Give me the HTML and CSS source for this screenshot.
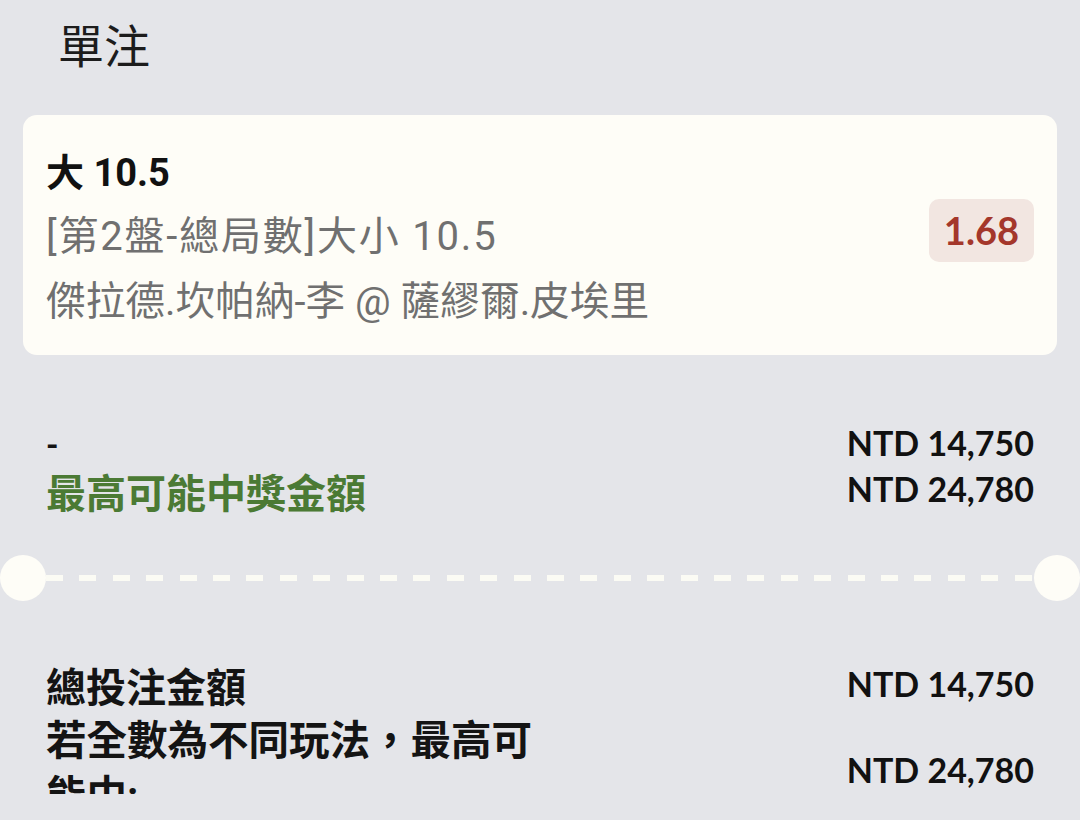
FILE: index.html
```html
<!DOCTYPE html>
<html lang="zh-Hant">
<head>
    <meta charset="UTF-8">
    <meta name="viewport" content="width=device-width, initial-scale=1.0">
    <title>單注</title>
    <link rel="stylesheet" href="styles.css">
</head>
<body>
    <div class="screen">
        <h2 class="title">單注</h2>

        <div class="bet-card">
            <div class="bet-info">
                <div class="bet-pick">大 10.5</div>
                <div class="bet-line market">[第2盤-總局數]大小 10.5</div>
                <div class="bet-line last">傑拉德.坎帕納-李 @ 薩繆爾.皮埃里</div>
            </div>
            <div class="odds">1.68</div>
        </div>

        <div class="summary">
            <div class="row">
                <span class="label dash">-</span>
                <span class="amount">NTD 14,750</span>
            </div>
            <div class="row">
                <span class="label win">最高可能中獎金額</span>
                <span class="amount">NTD 24,780</span>
            </div>
        </div>

        <div class="ticket-cut">
            <span class="notch"></span>
            <span class="cut-line"></span>
            <span class="notch"></span>
        </div>

        <div class="totals">
            <div class="row total-row">
                <span class="label">總投注金額</span>
                <span class="amount">NTD 14,750</span>
            </div>
            <div class="row multi-row">
                <span class="label wrap">若全數為不同玩法，最高可能中:</span>
                <span class="amount">NTD 24,780</span>
            </div>
        </div>
    </div>
</body>
</html>
```

FILE: styles.css
```css
body { margin: 0; background: #e4e5e9; font-family: Roboto, "Noto Sans CJK TC", sans-serif; color: #141414; }
.screen { height: 794px; overflow: hidden; }

.title { margin: 0; padding-left: 58px; height: 94px; line-height: 94px; font-size: 46px; font-weight: 400; color: #1c1c1c; }

.bet-card { display: flex; align-items: center; margin: 21px 23px 0; padding: 26px 23px 21px; background: #fefdf7; border-radius: 14px; }
.bet-info { flex: 1; }
.bet-pick { height: 64px; line-height: 64px; font-size: 38px; font-weight: 700; color: #111; }
.bet-line { height: 64px; line-height: 64px; font-size: 40px; color: #707070; }
.bet-line.market { letter-spacing: 1.8px; }
.bet-line.last { height: 65px; line-height: 65px; font-size: 39.7px; }
.odds { margin-bottom: 14px; padding: 0 15px; height: 63px; line-height: 63px; background: #f2e6e1; border-radius: 10px; font-family: Lato, sans-serif; font-size: 38px; font-weight: 700; color: #a4372b; }

.summary { margin-top: 67px; padding: 0 46px; }
.row { display: flex; justify-content: space-between; align-items: center; }
.summary .row { height: 46px; }
.summary .amount { margin-top: -5px; }
.label { font-size: 40px; font-weight: 700; }
.label.dash { font-size: 32px; }
.label.win { color: #4b7a34; }
.amount { font-family: Lato, sans-serif; font-size: 34px; font-weight: 700; color: #111; }

.ticket-cut { display: flex; align-items: center; margin-top: 41px; height: 46px; }
.notch { width: 46px; height: 46px; border-radius: 50%; background: #fefdf7; flex: none; }
.cut-line { flex: 1; height: 6px; background: repeating-linear-gradient(to right, #fbfbf4 0 17px, transparent 17px 33.4px); }

.totals { margin-top: 60px; padding: 0 46px; }
.total-row { height: 52px; }
.total-row .label { margin-top: -4px; }
.total-row .amount { margin-top: -8px; }
.multi-row { margin-top: 1px; }
.label.wrap { width: 500px; line-height: 55px; font-size: 40.5px; }
```
